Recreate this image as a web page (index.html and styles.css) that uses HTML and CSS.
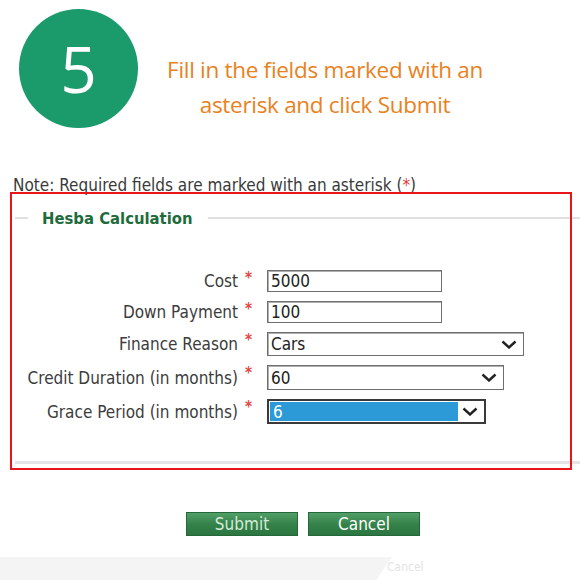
FILE: index.html
```html
<!DOCTYPE html>
<html>
<head>
<meta charset="utf-8">
<link rel="stylesheet" href="styles.css">
</head>
<body>
<div class="page">
  <header class="step">
    <div class="step-badge">5</div>
    <p class="step-text">Fill in the fields marked with an<br>asterisk and click Submit</p>
  </header>

  <div class="note">Note: Required fields are marked with an asterisk (<span class="req">*</span>)</div>

  <div class="highlight">
    <section class="fieldset">
      <div class="legend-row"><span class="legend">Hesba Calculation</span></div>
      <div class="form-grid">
        <label class="lbl">Cost</label><span class="star">*</span>
        <div class="cell"><div class="input w-short">5000</div></div>

        <label class="lbl">Down Payment</label><span class="star">*</span>
        <div class="cell"><div class="input w-short">100</div></div>

        <label class="lbl">Finance Reason</label><span class="star">*</span>
        <div class="cell"><div class="select w-long"><span class="val">Cars</span><svg class="chev" viewBox="0 0 16 9"><path d="M1.5 1.5 L8 7.5 L14.5 1.5" fill="none" stroke="#222" stroke-width="2.4"/></svg></div></div>

        <label class="lbl">Credit Duration (in months)</label><span class="star">*</span>
        <div class="cell"><div class="select w-mid"><span class="val">60</span><svg class="chev" viewBox="0 0 16 9"><path d="M1.5 1.5 L8 7.5 L14.5 1.5" fill="none" stroke="#222" stroke-width="2.4"/></svg></div></div>

        <label class="lbl">Grace Period (in months)</label><span class="star">*</span>
        <div class="cell"><div class="select w-grace focused"><span class="val sel">6</span><svg class="chev" viewBox="0 0 16 9"><path d="M1.5 1.5 L8 7.5 L14.5 1.5" fill="none" stroke="#222" stroke-width="2.4"/></svg></div></div>
      </div>
    </section>
  </div>

  <div class="actions">
    <button class="btn btn-submit">Submit</button>
    <button class="btn">Cancel</button>
  </div>

  <div class="band">
    <div class="band-shape"></div>
    <span class="band-text">Cancel</span>
  </div>
</div>
</body>
</html>
```

FILE: styles.css
```css
html, body {
  margin: 0;
  padding: 0;
  background: #ffffff;
}

.page {
  width: 580px;
  height: 580px;
  overflow: hidden;
  font-family: "DejaVu Sans Condensed", "DejaVu Sans", sans-serif;
}

/* header */
.step {
  display: flex;
  align-items: flex-start;
  padding: 9px 0 0 19px;
  height: 160px;
  box-sizing: border-box;
}

.step-badge {
  width: 119px;
  height: 119px;
  border-radius: 50%;
  background: #1b9a6c;
  color: #ffffff;
  font-family: "Open Sans", sans-serif;
  font-size: 64px;
  line-height: 119px;
  text-align: center;
  flex: 0 0 119px;
}

.step-text {
  margin: 0;
  flex: 0 0 374px;
  padding-top: 43px;
  text-align: center;
  color: #e8821e;
  font-family: "Open Sans", sans-serif;
  font-size: 22.5px;
  letter-spacing: -0.3px;
  line-height: 35px;
}

/* note */
.note {
  padding-left: 13px;
  margin-top: 15px;
  font-size: 17px;
  line-height: 20px;
  color: #3a3a3a;
}

.req {
  color: #e03b3b;
}

/* highlighted form */
.highlight {
  position: relative;
  margin: -3px 0 0 10px;
  width: 562px;
  height: 278px;
  box-sizing: border-box;
  padding: 16px 0 0 5px;
}

.highlight::after {
  content: "";
  position: absolute;
  inset: 0;
  border: 2px solid #e8141a;
  pointer-events: none;
}

.fieldset {
  width: 565px;
  height: 256px;
  box-sizing: border-box;
  border-bottom: 3px solid #e4e4e6;
}

.legend-row {
  display: flex;
  align-items: center;
  height: 20px;
}

.legend-row::before {
  content: "";
  width: 13px;
  height: 2px;
  background: #e0e0e0;
}

.legend-row::after {
  content: "";
  flex: 1;
  height: 2px;
  background: #e0e0e0;
}

.legend {
  padding: 0 15px 0 14px;
  font-weight: bold;
  font-size: 16.5px;
  color: #1e6b3c;
}

.form-grid {
  display: grid;
  grid-template-columns: 228px 27px auto;
  grid-template-rows: 22px 22px 24px 25px 25px;
  row-gap: 9px;
  margin-top: 42px;
  margin-left: -3px;
  align-items: center;
}

.lbl {
  text-align: right;
  padding-right: 2px;
  font-size: 17px;
  color: #3c3c3c;
  white-space: nowrap;
}

.star {
  padding-left: 5px;
  align-self: start;
  color: #e04848;
  font-size: 15px;
  font-weight: bold;
  line-height: 16px;
}

.cell {
  height: 100%;
}

.input, .select {
  height: 100%;
  box-sizing: border-box;
  border: 1px solid #6e6e6e;
  box-shadow: inset 1px 1px 0 #b0b0b0;
  background: #ffffff;
  font-size: 17px;
  color: #222222;
  display: flex;
  align-items: center;
  padding-left: 3px;
}

.w-short { width: 175px; }
.w-long { width: 257px; }
.w-mid { width: 237px; }
.w-grace { width: 219px; }

.select .val {
  flex: 1;
}

.chev {
  width: 16px;
  height: 9px;
  margin-right: 6px;
  margin-left: 6px;
}

.select.focused {
  border: 2px solid #3a3a3a;
  box-shadow: none;
  padding: 1px;
}

.select.focused .chev {
  margin-left: 4px;
  margin-right: 5px;
}

.val.sel {
  align-self: stretch;
  display: flex;
  align-items: center;
  background: #2b9ad6;
  color: #ffffff;
  padding-left: 3px;
}

/* buttons */
.actions {
  display: flex;
  gap: 10px;
  padding-left: 186px;
  margin-top: 42px;
}

.btn {
  width: 112px;
  height: 24px;
  padding: 0;
  border: 1px solid #24683a;
  background: linear-gradient(#519f66, #338149 55%, #2b7541);
  color: #ffffff;
  font-family: "DejaVu Sans Condensed", "DejaVu Sans", sans-serif;
  font-size: 17px;
  line-height: 22px;
}

.btn-submit {
  color: #d4ead6;
}

/* faint bottom band */
.band {
  display: flex;
  align-items: center;
  margin-top: 21px;
  height: 23px;
}

.band-shape {
  width: 392px;
  height: 100%;
  background: #f4f4f4;
  clip-path: polygon(0 0, 100% 0, 96% 100%, 0 100%);
}

.band-text {
  margin-left: -5px;
  margin-top: -4px;
  font-size: 12px;
  color: #e4e4e4;
}
```
